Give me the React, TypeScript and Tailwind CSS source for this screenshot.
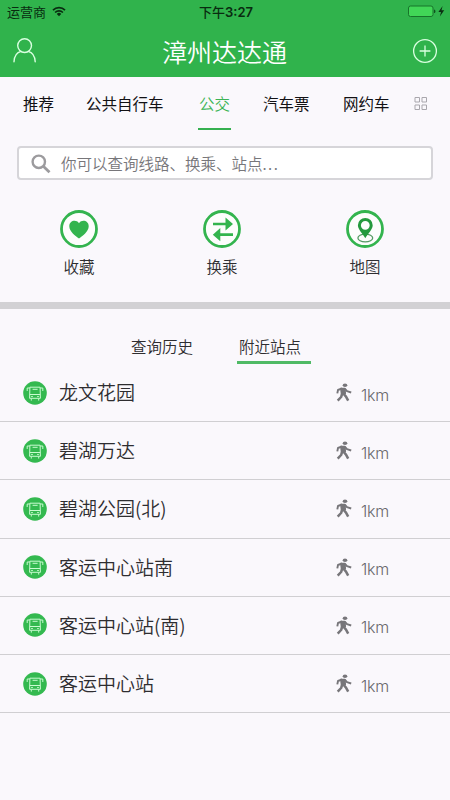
const tabs = [
  { label: "推荐", className: "ml-[23px] w-[31px]" },
  { label: "公共自行车", className: "ml-[32px] w-[78px]" },
  { label: "公交", className: "ml-[35px] w-[31px]", active: true },
  { label: "汽车票", className: "ml-[33px] w-[47px]" },
  { label: "网约车", className: "ml-[33px] w-[47px]" }
];

const stations = [
  { name: "龙文花园", distance: "1km" },
  { name: "碧湖万达", distance: "1km" },
  { name: "碧湖公园(北)", distance: "1km" },
  { name: "客运中心站南", distance: "1km" },
  { name: "客运中心站(南)", distance: "1km" },
  { name: "客运中心站", distance: "1km" }
];

function WifiIcon() {
  return (
    <svg width="14" height="11" viewBox="0 0 14 11" fill="none" stroke="#092b10" strokeWidth="1.7">
      <path d="M1 4.1a8.6 8.6 0 0 1 12 0" />
      <path d="M3.1 6.5a5.6 5.6 0 0 1 7.8 0" />
      <path d="M7 10.2 4.8 7.9a3.1 3.1 0 0 1 4.4 0z" fill="#092b10" stroke="none" />
    </svg>
  );
}

function BatteryIcon() {
  return (
    <svg width="38" height="13" viewBox="0 0 38 13">
      <rect x="0.5" y="1" width="24.5" height="10.5" rx="2" fill="#41d657" stroke="#17742a" />
      <path d="M26.2 4.4c1.6.3 1.6 3.4 0 3.7z" fill="#0b3a15" />
      <path d="M34.6 1 30.4 7h2.6l-1.1 4.4L36.2 5.3h-2.7z" fill="#0b2f12" />
    </svg>
  );
}

function UserIcon() {
  return (
    <svg width="24" height="26" viewBox="0 0 24 26" fill="none" stroke="#d9ffe0" strokeWidth="1.4">
      <circle cx="11.6" cy="7.6" r="6.9" />
      <path d="M1 23.8C1.3 18.2 4.3 14.3 8 13.4M15.2 13.4c3.7.9 6.7 4.8 7 10.4" strokeLinecap="round" />
    </svg>
  );
}

function HeartIcon() {
  return (
    <svg width="38" height="38" viewBox="0 0 38 38">
      <circle cx="19" cy="19" r="17.5" fill="#fcfdfc" stroke="#33b44e" strokeWidth="2.8" />
      <path
        d="M19 28.6C15.5 25.8 9.3 21.5 9.3 16.2c0-5.4 6.6-7.3 9.7-3 3.1-4.3 9.7-2.4 9.7 3 0 5.3-6.2 9.6-9.7 12.4z"
        fill="#33b44e"
      />
    </svg>
  );
}

function TransferIcon() {
  return (
    <svg width="38" height="38" viewBox="0 0 38 38">
      <circle cx="19" cy="19" r="17.5" fill="#fcfdfc" stroke="#33b44e" strokeWidth="2.8" />
      <path
        d="M10 12.8h12.5V7.5L30 14l-7.5 6.5v-5.2H10zM30 23.3H17.3v-5.2L9.8 24.7l7.5 6.5v-5.3H30z"
        fill="#33b44e"
      />
    </svg>
  );
}

function MapIcon() {
  return (
    <svg width="38" height="38" viewBox="0 0 38 38">
      <circle cx="19" cy="19" r="17.5" fill="#fcfdfc" stroke="#33b44e" strokeWidth="2.8" />
      <ellipse cx="19.3" cy="28" rx="7.4" ry="3.9" fill="none" stroke="#549963" strokeWidth="1.3" />
      <path
        fillRule="evenodd"
        d="M19.3 28.3c-2-4-7.4-8.5-7.4-13a7.4 7.4 0 0 1 14.8 0c0 4.5-5.4 9-7.4 13zm0-17.4a4.4 4.4 0 1 0 0 8.8 4.4 4.4 0 0 0 0-8.8z"
        fill="#249a3e"
      />
    </svg>
  );
}

function BusIcon() {
  return (
    <svg width="24" height="24" viewBox="0 0 24 24" fill="none" stroke="#c9fbd0" strokeWidth="1">
      <circle cx="12" cy="12" r="11.8" fill="#34b950" stroke="none" />
      <path d="M6.9 6.2h10.2l.3 11.1H6.6zM6.8 13.5h10.4M9.6 8.3h5M6.8 7H4.2v3M17.2 7h2.6v3" />
      <path d="M8.3 17.6v2M15.7 17.6v2M8.2 15.5h1.6M14.2 15.5h1.6" />
    </svg>
  );
}

function WalkIcon() {
  return (
    <svg width="16" height="19" viewBox="0 0 16 19" fill="none" stroke="#77767a" strokeLinejoin="round">
      <ellipse cx="9" cy="2.3" rx="2.3" ry="1.8" fill="#77767a" stroke="none" />
      <path d="M5 5.6h3.7l.4 4.8-3.3 1z" fill="#77767a" strokeWidth="1.9" />
      <path d="M6 5.4 2 7 1.3 10.4M8.8 5.7l2.2 2.5 4.2 1.3" strokeWidth="1.9" />
      <path d="M6.3 10.4 5.1 14l-3.4 3.6M7.5 10.7l2.5 2.9 2.2 4" strokeWidth="2.5" />
    </svg>
  );
}

const actions = [
  { label: "收藏", icon: <HeartIcon /> },
  { label: "换乘", icon: <TransferIcon /> },
  { label: "地图", icon: <MapIcon /> }
];

export default function App() {
  return (
    <main className="h-[800px] w-[450px] overflow-hidden bg-[#faf8fc] font-['Noto_Sans_CJK_SC',sans-serif] text-[#2e2d30]">
      <header className="h-[77px] bg-[#30b34c]">
        <div className="grid h-[23px] grid-cols-3 items-center text-[13px] leading-none text-[#092b10]">
          <div className="flex items-center gap-[6px] pl-[7px]">
            <span>运营商</span>
            <WifiIcon />
          </div>
          <p className="pl-[2px] text-center font-medium">
            下午<span className="font-['Inter'] font-semibold">3:27</span>
          </p>
          <div className="flex justify-end pr-[4px]">
            <BatteryIcon />
          </div>
        </div>
        <div className="flex h-[54px] items-center justify-between pt-[2px] pr-[12px] pl-[13px] text-white">
          <UserIcon />
          <h1 className="text-[25px] leading-none font-[350]">漳州达达通</h1>
          <svg width="26" height="26" viewBox="0 0 26 26" fill="none" stroke="#d9ffe0" strokeWidth="1.3">
            <circle cx="13" cy="13" r="11.4" />
            <path d="M13 7.6v10.8M7.6 13h10.8" />
          </svg>
        </div>
      </header>

      <nav className="flex h-[53px] text-[15.5px] whitespace-nowrap text-[#121114]">
        {tabs.map((tab) => (
          <button
            key={tab.label}
            className={`relative shrink-0 pt-px text-left ${tab.className} ${tab.active ? "font-[350] text-[#3bb455]" : ""}`}
          >
            {tab.label}
            {tab.active && <span className="absolute -right-px bottom-0 -left-px h-[2px] bg-[#35b050]" />}
          </button>
        ))}
        <svg className="mt-5 ml-[24px]" width="14" height="14" viewBox="0 0 14 14" fill="none" stroke="#a9a7ad">
          <path d="M1 .5h4.5V5H1zM8 .5h4.5V5H8zM1 8h4.5v4.5H1zM8 8h4.5v4.5H8z" />
        </svg>
      </nav>

      <div className="mx-[17px] mt-4 flex h-[34px] items-center rounded-[4px] border-2 border-[#d6d5d9] bg-white pl-3 text-[15.5px] text-[#77767a]">
        <svg className="mt-px" width="20" height="20" viewBox="0 0 20 20" fill="none" stroke="#9c9b9e" strokeWidth="2.4">
          <circle cx="7.8" cy="7.8" r="6.2" />
          <path d="m12.3 12.3 6.2 6" strokeWidth="2.8" />
        </svg>
        <span className="mt-[2px] ml-[10px] font-[350]">
          你可以查询线路、换乘、站点<span className="tracking-[1.4px]">...</span>
        </span>
      </div>

      <section className="mt-[30px] flex h-[92px] justify-between pr-[65px] pl-[59px]">
        {actions.map((action) => (
          <div key={action.label} className="flex w-[40px] flex-col items-center">
            {action.icon}
            <span className="mt-[11px] text-[15.5px] leading-none font-[350]">{action.label}</span>
          </div>
        ))}
      </section>

      <div className="h-[7px] bg-[#d2d1d4]" />

      <div className="flex h-[55px] text-[15.5px] leading-none font-[350]">
        <button className="ml-[130px] flex w-[64px] pt-[30px] pl-px">查询历史</button>
        <button className="ml-[43px] flex w-[74px] border-b-[3px] border-[#4fba65] pt-[30px] pl-[2px]">附近站点</button>
      </div>

      <ul>
        {stations.map((station) => (
          <li key={station.name} className="flex h-[58.2px] items-center border-b border-[#d0cfd2] pl-[23px]">
            <BusIcon />
            <span className="-mt-[2px] ml-3 w-[277px] text-[19px] leading-none font-[350]">{station.name}</span>
            <WalkIcon />
            <span className="mt-1 ml-[9px] font-['Inter'] text-[16px] leading-none font-light tracking-[-0.3px] text-[#68676b]">
              {station.distance}
            </span>
          </li>
        ))}
      </ul>
    </main>
  );
}
